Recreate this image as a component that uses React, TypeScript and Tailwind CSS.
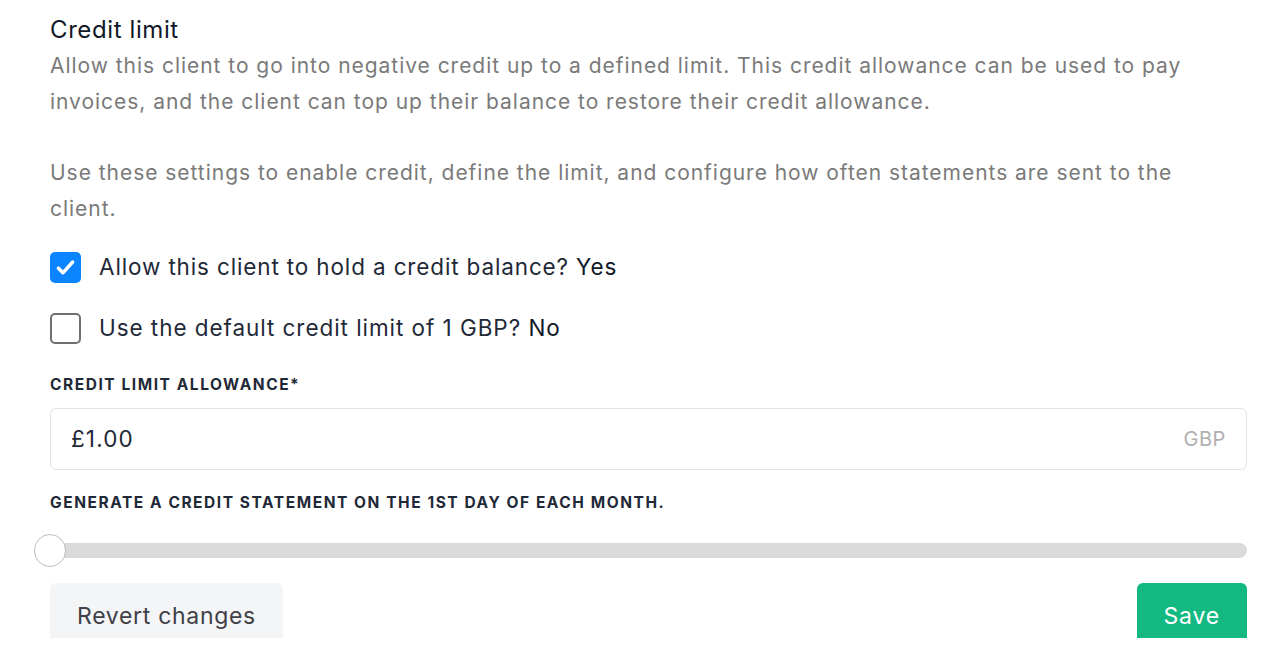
import { useState } from 'react';

export default function App() {
  const [allowCredit, setAllowCredit] = useState(true);
  const [useDefault, setUseDefault] = useState(false);
  const [limit, setLimit] = useState('£1.00');
  const [day, setDay] = useState(1);

  return (
    <div
      className="h-[638px] overflow-hidden bg-white"
      style={{ fontFamily: 'Inter, "Noto Sans", sans-serif' }}
    >
      <div className="pl-[50px] pr-[39px] pt-[14px]">
        {/* Heading + help text */}
        <h2 className="text-[24px] leading-[32px] tracking-[0.025em] text-[#111827]">Credit limit</h2>
        <p className="mt-0.5 max-w-[1185px] text-[21px] leading-[36px] tracking-[0.046em] text-[#7a7a7a]">
          Allow this client to go into negative credit up to a defined limit. This credit allowance can be used to pay
          invoices, and the client can top up their balance to restore their credit allowance.
        </p>
        <p className="mt-[35px] max-w-[1185px] text-[21px] leading-[36px] tracking-[0.046em] text-[#7a7a7a]">
          Use these settings to enable credit, define the limit, and configure how often statements are sent to the
          client.
        </p>

        {/* Checkboxes */}
        <label className="mt-6 flex items-center gap-[18px] cursor-pointer">
          <Checkbox checked={allowCredit} onChange={() => setAllowCredit((v) => !v)} />
          <span className="text-[22.5px] leading-[32px] tracking-[0.038em] text-[#1f2937]">
            Allow this client to hold a credit balance? <span className="text-[#111827]">{allowCredit ? 'Yes' : 'No'}</span>
          </span>
        </label>
        <label className="mt-[29px] flex items-center gap-[18px] cursor-pointer">
          <Checkbox checked={useDefault} onChange={() => setUseDefault((v) => !v)} />
          <span className="text-[22.5px] leading-[32px] tracking-[0.042em] text-[#1f2937]">
            Use the default credit limit of 1 GBP? <span className="text-[#111827]">{useDefault ? 'Yes' : 'No'}</span>
          </span>
        </label>

        {/* Credit limit input */}
        <div className="mt-[31px] text-[15.5px] leading-[20px] font-bold tracking-[0.1em] text-[#1f2937]">
          CREDIT LIMIT ALLOWANCE*
        </div>
        <div className="mt-[13px] h-[62px] flex items-center rounded-md border border-[#e2e2e2] px-5">
          <input
            value={limit}
            onChange={(e) => setLimit(e.target.value)}
            className="flex-1 min-w-0 bg-transparent outline-none text-[22.5px] tracking-[0.05em] text-[#1f2937]"
          />
          <span className="text-[20px] tracking-[0.03em] text-[#b0b0b0]">GBP</span>
        </div>

        {/* Statement slider */}
        <div className="mt-[23px] text-[15.5px] leading-[20px] font-bold tracking-[0.1em] text-[#1f2937]">
          GENERATE A CREDIT STATEMENT ON THE 1ST DAY OF EACH MONTH.
        </div>
        <div className="mt-[21px] relative h-[33px] flex items-center">
          <div className="w-full h-[15px] rounded-full bg-[#dadada]" />
          <div
            className="absolute top-0 w-[32px] h-[33px] -ml-[16px] rounded-full bg-white border-[1.5px] border-[#bdbdbd]"
            style={{ left: `${((day - 1) / 27) * 100}%` }}
          />
          <input
            type="range"
            min={1}
            max={28}
            value={day}
            onChange={(e) => setDay(Number(e.target.value))}
            className="absolute inset-0 w-full opacity-0 cursor-pointer"
          />
        </div>

        {/* Actions */}
        <div className="mt-4 flex items-start justify-between">
          <button className="h-[66px] px-[27px] rounded-md bg-[#f4f5f7] text-[23px] tracking-[0.03em] text-[#3f3f46]">
            Revert changes
          </button>
          <button className="h-[66px] px-[27px] rounded-md bg-[#13b981] text-[23px] tracking-[0.035em] text-white">
            Save
          </button>
        </div>
      </div>
    </div>
  );
}

function Checkbox({ checked, onChange }: { checked: boolean; onChange: () => void }) {
  return (
    <span
      onClick={onChange}
      className={
        checked
          ? 'w-[31px] h-[31px] flex-shrink-0 rounded-[5px] bg-[#0a84ff] flex items-center justify-center'
          : 'w-[31px] h-[31px] flex-shrink-0 rounded-[5px] border-2 border-[#707070] bg-white'
      }
    >
      {checked && (
        <svg width="23" height="23" viewBox="0 0 20 20" fill="none">
          <path d="M3.8 10.6l4 4L16.2 5.2" stroke="white" strokeWidth="3" strokeLinecap="round" strokeLinejoin="round" />
        </svg>
      )}
    </span>
  );
}
